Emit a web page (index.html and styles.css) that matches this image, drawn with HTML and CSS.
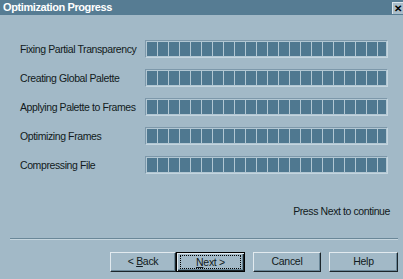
FILE: index.html
```html
<!doctype html>
<html lang="en">
<head>
	<meta charset="UTF-8">
	<title>Optimization Progress</title>
	<link rel="stylesheet" href="styles.css">
</head>
<body>
	<div class="dialog">
		<div class="title">
			<span class="title-text">Optimization Progress</span>
			<span class="close">&#x2715;</span>
		</div>
		<div class="steps">
			<div class="label">Fixing Partial Transparency</div>
			<div class="bar"><div class="fill"></div></div>
			<div class="label">Creating Global Palette</div>
			<div class="bar"><div class="fill"></div></div>
			<div class="label">Applying Palette to Frames</div>
			<div class="bar"><div class="fill"></div></div>
			<div class="label">Optimizing Frames</div>
			<div class="bar"><div class="fill"></div></div>
			<div class="label">Compressing File</div>
			<div class="bar"><div class="fill"></div></div>
		</div>
		<div class="hint">Press Next to continue</div>
		<div class="sep"></div>
		<div class="buttons">
			<div class="btn back">&lt; <u>B</u>ack</div>
			<div class="btn next"><span class="focus"><u>N</u>ext &gt;</span></div>
			<div class="btn cancel">Cancel</div>
			<div class="btn help">Help</div>
		</div>
	</div>
</body>
</html>
```
FILE: styles.css
```css
*{margin:0;padding:0;box-sizing:border-box;}
body{background:#a2b9c7;font-family:"Liberation Sans",Arial,sans-serif;color:#111a20;}
.dialog{
	width:403px;
	height:279px;
	background:#a2b9c7;
	display:flex;
	flex-direction:column;
}
.title{
	height:15px;
	background:#567c93;
	display:flex;
	align-items:center;
	justify-content:space-between;
	padding-left:3px;
}
.title-text{
	color:#fff;
	font-weight:bold;
	font-size:11px;
	letter-spacing:-0.4px;
	line-height:15px;
}
.close{
	width:11px;
	height:12px;
	margin-top:1px;
	background:#a9bdca;
	border-top:1px solid #dbe5eb;
	border-left:1px solid #dbe5eb;
	color:#000;
	font-size:10px;
	font-weight:bold;
	line-height:11px;
	text-align:center;
}
.steps{
	display:grid;
	grid-template-columns:125px 243px;
	grid-auto-rows:18px;
	row-gap:11px;
	padding:25px 0 0 20px;
}
.label{
	font-size:10.5px;
	letter-spacing:-0.4px;
	line-height:18px;
}
.bar{
	border-top:1px solid #7d98aa;
	border-left:1px solid #7d98aa;
	border-bottom:1px solid #c4d5df;
	border-right:1px solid #c4d5df;
	background:#b2c7d3;
	padding:1px;
}
.fill{
	height:100%;
	background:repeating-linear-gradient(to right,#4f7890 0 10px,#b2c7d3 10px 11px);
}
.hint{
	margin-top:31px;
	padding-right:13px;
	text-align:right;
	font-size:10.5px;
	letter-spacing:-0.4px;
	line-height:12px;
}
.sep{
	margin:21px 5px 0 10px;
	height:2px;
	border-top:1px solid #6a8798;
	border-bottom:1px solid #c6d6df;
}
.buttons{
	display:flex;
	margin-top:12px;
	padding-left:110px;
}
.btn{
	height:20px;
	font-size:10.5px;
	letter-spacing:-0.3px;
	line-height:16px;
	text-align:center;
	background:#a2b9c7;
	border-top:1px solid #e2eaef;
	border-left:1px solid #e2eaef;
	border-right:1px solid #1b252b;
	border-bottom:1px solid #1b252b;
	box-shadow:inset -1px -1px 0 #6a8798;
}
.back{width:66px;}
.next{
	width:69px;
	border:1px solid #000;
	box-shadow:inset 1px 1px 0 #e2eaef,inset -1px -1px 0 #1b252b,inset -2px -2px 0 #6a8798;
	padding:2px 3px;
}
.next .focus{
	display:block;
	height:14px;
	line-height:12px;
	border:1px dotted #000;
}
.cancel{width:68px;margin-left:8px;}
.help{width:69px;margin-left:8px;}
```
